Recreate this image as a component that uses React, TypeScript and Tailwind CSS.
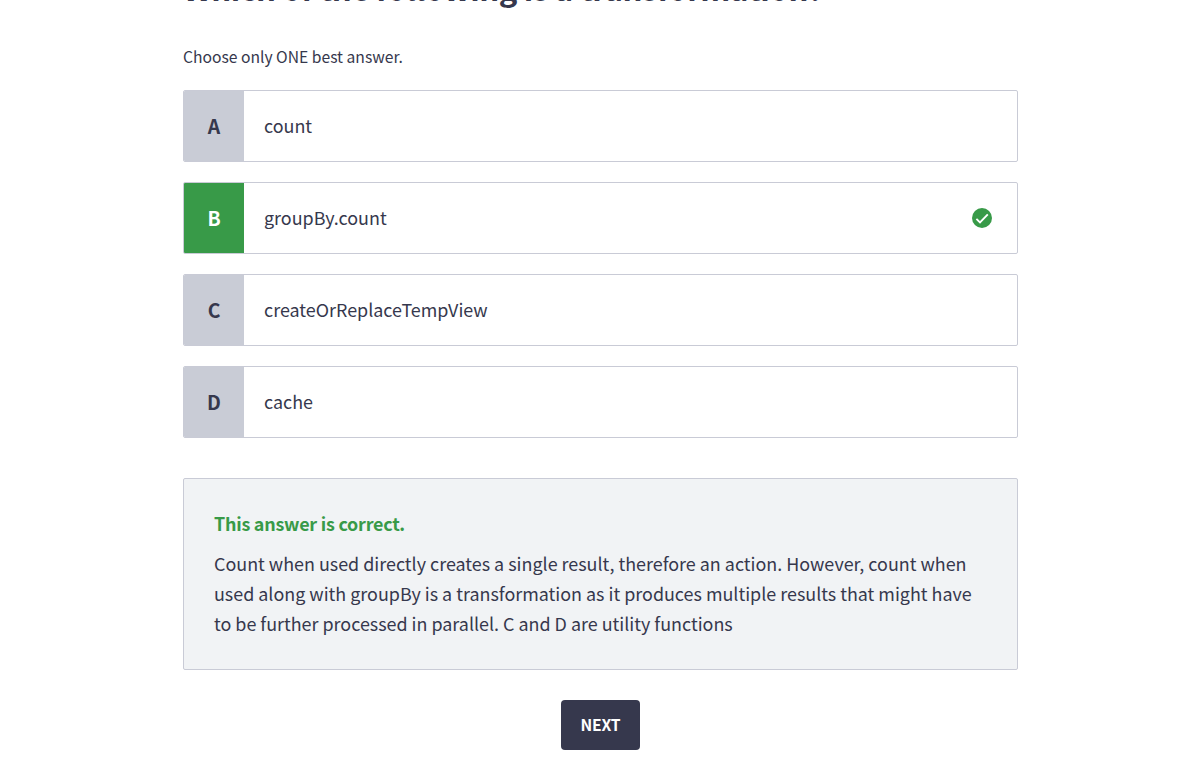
import React from 'react';

type Option = { letter: string; text: string; correct?: boolean };

const options: Option[] = [
  { letter: 'A', text: 'count' },
  { letter: 'B', text: 'groupBy.count', correct: true },
  { letter: 'C', text: 'createOrReplaceTempView' },
  { letter: 'D', text: 'cache' },
];

function CheckBadge() {
  return (
    <svg width="20" height="20" viewBox="0 0 20 20" aria-hidden="true">
      <circle cx="10" cy="10" r="10" fill="#389a48" />
      <path d="M4.4 10.8L8 14.4L15.8 6.4" fill="none" stroke="#fff" strokeWidth="1.9" />
    </svg>
  );
}

function OptionRow({ letter, text, correct }: Option) {
  return (
    <div className="flex h-[72px] overflow-hidden rounded-[2px] border border-[#c9cbd6] bg-white">
      <div
        className={
          correct
            ? 'flex w-[60px] items-center justify-center bg-[#389a48] text-[19.4px] font-bold text-white'
            : 'flex w-[60px] items-center justify-center bg-[#c9ccd6] text-[19.4px] font-bold text-[#36384d]'
        }
      >
        <span>{letter}</span>
      </div>
      <div className="flex flex-1 items-center justify-between pr-[25px] pl-5 text-[17.92px]">
        <span className="pb-[2px]">{text}</span>
        {correct && <CheckBadge />}
      </div>
    </div>
  );
}

export default function App() {
  return (
    <div className="h-[757px] overflow-hidden bg-white font-['Noto_Sans_CJK_SC','Noto_Sans',sans-serif] text-[#36384d]">
      <main className="ml-[183px] flex w-[835px] flex-col">
        <h1 className="-mt-[32px] h-10 text-[31.2px] leading-10 font-bold tracking-[-0.38px] whitespace-nowrap">
          Which of the following is a transformation?
        </h1>
        <p className="mt-[34px] h-[30px] text-[15.67px] leading-[30px]">Choose only ONE best answer.</p>
        <div className="mt-[18px] flex flex-col gap-5">
          {options.map((o) => (
            <OptionRow key={o.letter} {...o} />
          ))}
        </div>
        <section className="mt-10 h-[192px] rounded-[2px] border border-[#c9cbd6] bg-[#f1f3f5] px-[30px] pt-[29px] text-[17.92px] leading-[30px]">
          <h2 className="font-bold tracking-[-0.23px] text-[#389a48]">This answer is correct.</h2>
          <p className="mt-[10px] whitespace-nowrap">
            Count when used directly creates a single result, therefore an action. However, count when
            <br />
            used along with groupBy is a transformation as it produces multiple results that might have
            <br />
            to be further processed in parallel. C and D are utility functions
          </p>
        </section>
        <button className="mt-[30px] flex h-[50px] w-[79px] items-center justify-center self-center rounded-[4px] bg-[#36384d] text-[15.67px] font-bold tracking-[-0.2px] text-white">
          NEXT
        </button>
      </main>
    </div>
  );
}
